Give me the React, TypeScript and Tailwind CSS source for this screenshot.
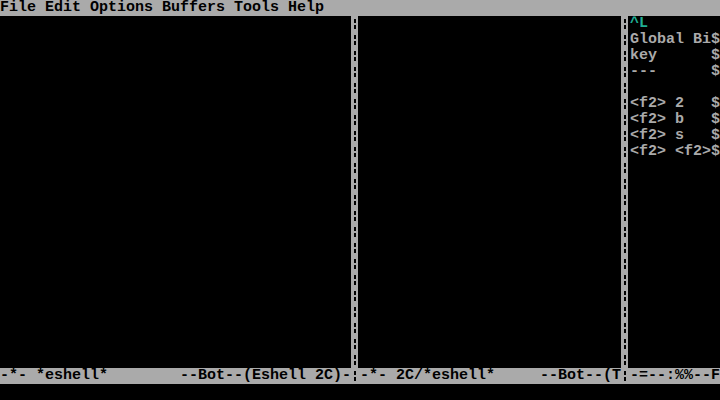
import React from 'react';

const font = "font-['Liberation_Mono',monospace] text-[15px] leading-4 font-bold whitespace-pre";

const dash =
  'w-[2px] h-full ml-[3px] bg-[repeating-linear-gradient(to_bottom,transparent_0px,transparent_3px,#000_3px,#000_7px,transparent_7px,transparent_9px,#000_9px,#000_13px,transparent_13px,transparent_16px)]';

function Divider() {
  return (
    <div className="w-[9px] h-full shrink-0">
      <div className="w-[7px] h-full bg-[#aaaaaa]">
        <div className={dash} />
      </div>
    </div>
  );
}

function ModeDivider() {
  return (
    <div className="w-[9px] h-4 shrink-0 bg-[#aaaaaa]">
      <div className={dash} />
    </div>
  );
}

const helpLines = [
  'Global Bi$',
  'key      $',
  '---      $',
  '',
  '<f2> 2   $',
  '<f2> b   $',
  '<f2> s   $',
  '<f2> <f2>$',
];

export default function App() {
  return (
    <div className={`w-[720px] h-[400px] bg-black flex flex-col overflow-hidden ${font}`}>
      {/* menu bar */}
      <div className="h-4 bg-[#aaaaaa] text-black">File Edit Options Buffers Tools Help</div>

      {/* windows */}
      <div className="h-[352px] flex">
        <div className="w-[351px] h-full" />
        <Divider />
        <div className="w-[261px] h-full" />
        <Divider />
        <div className="w-[90px] h-full text-[#aaaaaa]">
          <div className="h-4 text-[#1fae94]">^L</div>
          {helpLines.map((line, i) => (
            <div key={i} className="h-4">
              {line}
            </div>
          ))}
        </div>
      </div>

      {/* mode lines */}
      <div className="h-4 flex bg-[#aaaaaa] text-black">
        <div className="w-[351px]">{'-*- *eshell*        --Bot--(Eshell 2C)-'}</div>
        <ModeDivider />
        <div className="w-[261px]">{'-*- 2C/*eshell*     --Bot--(T'}</div>
        <ModeDivider />
        <div className="w-[90px]">{'-=--:%%--F'}</div>
      </div>

      {/* echo area */}
      <div className="h-4" />
    </div>
  );
}
